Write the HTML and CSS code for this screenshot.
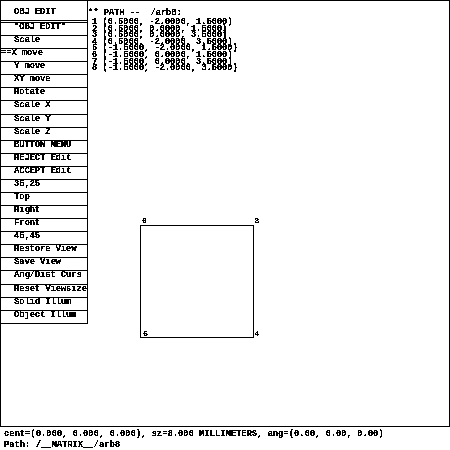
FILE: index.html
```html
<!DOCTYPE html>
<html lang="en">
<head>
    <meta charset="UTF-8">
    <title>MGED</title>
    <link rel="stylesheet" href="styles.css">
</head>
<body>
    <svg class="defs" width="0" height="0">
        <filter id="hard" color-interpolation-filters="sRGB">
            <feComponentTransfer>
                <feFuncR type="discrete" tableValues="0 0 1"/>
                <feFuncG type="discrete" tableValues="0 0 1"/>
                <feFuncB type="discrete" tableValues="0 0 1"/>
            </feComponentTransfer>
        </filter>
    </svg>
    <div class="screen">
        <div class="view">
            <div class="menu">
                <div class="menu-title">OBJ EDIT</div>
                <div class="menu-item">*OBJ EDIT*</div>
                <div class="menu-item">Scale</div>
                <div class="menu-item marked">==X move</div>
                <div class="menu-item">Y move</div>
                <div class="menu-item">XY move</div>
                <div class="menu-item">Rotate</div>
                <div class="menu-item">Scale X</div>
                <div class="menu-item">Scale Y</div>
                <div class="menu-item">Scale Z</div>
                <div class="menu-item">BUTTON MENU</div>
                <div class="menu-item">REJECT Edit</div>
                <div class="menu-item">ACCEPT Edit</div>
                <div class="menu-item">35,25</div>
                <div class="menu-item">Top</div>
                <div class="menu-item">Right</div>
                <div class="menu-item">Front</div>
                <div class="menu-item">45,45</div>
                <div class="menu-item">Restore View</div>
                <div class="menu-item">Save View</div>
                <div class="menu-item">Ang/Dist Curs</div>
                <div class="menu-item">Reset Viewsize</div>
                <div class="menu-item">Solid Illum</div>
                <div class="menu-item">Object Illum</div>
            </div>
            <div class="params">
                <div class="path">** PATH --  /arb8:</div>
                <pre class="verts">1 (0.5000, -2.0000, 1.5000)
2 (0.5000, 0.0000, 1.5000)
3 (0.5000, 0.0000, 3.5000)
4 (0.5000, -2.0000, 3.5000)
5 (-1.5000, -2.0000, 1.5000)
6 (-1.5000, 0.0000, 1.5000)
7 (-1.5000, 0.0000, 3.5000)
8 (-1.5000, -2.0000, 3.5000)</pre>
            </div>
            <div class="face">
                <span class="vlabel tl">6</span>
                <span class="vlabel tr">3</span>
                <span class="vlabel bl">5</span>
                <span class="vlabel br">4</span>
            </div>
        </div>
        <div class="status">
            <div>cent=(0.000, 0.000, 0.000), sz=8.000 MILLIMETERS, ang=(0.00, 0.00, 0.00)</div>
            <div>Path: /__MATRIX__/arb8</div>
        </div>
    </div>
</body>
</html>
```

FILE: styles.css
```css
html, body {
    margin: 0;
    background-color: #ffffff;
}
body {
    width: 450px;
    height: 450px;
    overflow: hidden;
    filter: url(#hard);
    font-family: "Liberation Mono", monospace;
    font-size: 9px;
    font-weight: bold;
    letter-spacing: -0.2px;
    color: #000000;
}
.defs {
    position: absolute;
}
.screen {
    display: flex;
    flex-direction: column;
    width: 450px;
    height: 450px;
}
.view {
    position: relative;
    flex: 1;
    display: flex;
    align-items: flex-start;
    border: 1px solid #000000;
}
.menu {
    width: 86px;
    border-right: 1px solid #000000;
    border-bottom: 1px solid #000000;
}
.menu-title {
    height: 18px;
    padding-top: 1px;
    line-height: 20px;
    padding-left: 13px;
    border-bottom: 1px solid #000000;
    margin-bottom: 1px;
}
.menu-item {
    box-sizing: border-box;
    height: 13.09px;
    padding-top: 1px;
    line-height: 7px;
    padding-left: 13px;
    border-top: 1px solid #000000;
    white-space: nowrap;
}
.menu-item.marked {
    padding-left: 0;
}
.params {
    padding: 8px 0 0 0;
}
.path {
    line-height: 9px;
    margin-bottom: 1px;
    white-space: pre;
}
.verts {
    margin: 0 0 0 4px;
    font: inherit;
    line-height: 6.6px;
}
.face {
    position: absolute;
    left: 139px;
    top: 224px;
    width: 112px;
    height: 111px;
    border: 1px solid #000000;
}
.vlabel {
    position: absolute;
    font-size: 8px;
    line-height: 7px;
}
.tl { left: 1px; top: -9px; }
.tr { right: -6px; top: -9px; }
.bl { left: 2px; bottom: 0; }
.br { right: -6px; bottom: 0; }
.status {
    box-sizing: border-box;
    height: 23px;
    padding: 2px 0 0 4px;
    line-height: 11px;
    letter-spacing: -0.13px;
    white-space: nowrap;
}
```
